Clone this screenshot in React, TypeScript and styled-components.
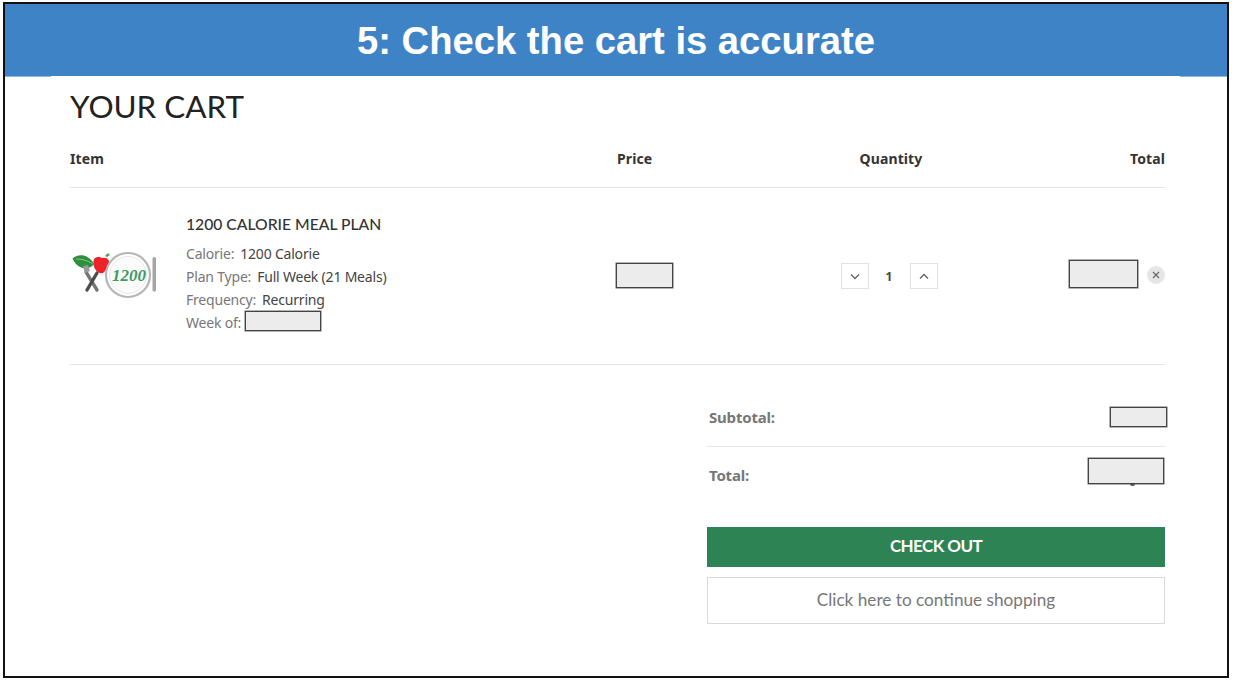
import React from "react";
import styled, { createGlobalStyle } from "styled-components";

const GlobalStyle = createGlobalStyle`
  html, body {
    margin: 0;
    padding: 0;
    background: #fff;
  }
  * {
    box-sizing: border-box;
  }
`;

const body = `"Noto Sans", "Open Sans", sans-serif`;
const display = `Lato, "Open Sans", sans-serif`;

const Slide = styled.div`
  width: 1226px;
  height: 676px;
  margin: 2px 0 0 3px;
  border: 2px solid #111;
  background: #fff;
  overflow: hidden;
`;

const Banner = styled.h1`
  margin: 0;
  height: 73px;
  background:
    linear-gradient(
        to right,
        #8fb8e0 46px,
        #fff 46px,
        #fff calc(100% - 47px),
        #8fb8e0 calc(100% - 47px)
      )
      bottom / 100% 1px no-repeat,
    #3f83c7;
  color: #fff;
  font: bold 38.2px/74px "Liberation Sans", Arial, sans-serif;
  text-align: center;
`;

const Content = styled.div`
  padding: 0 62px 0 65px;
`;

const Title = styled.h2`
  margin: 0;
  padding-top: 11px;
  height: 57px;
  font: 400 31.4px/36px ${display};
  color: #222;
`;

const CartGrid = styled.div`
  display: grid;
  grid-template-columns: 547px 150px 248px 150px;
  align-items: center;
`;

const HeadRow = styled(CartGrid)`
  height: 54px;
  border-bottom: 1px solid #e4e4e4;
  font: 700 14px/20px ${body};
  letter-spacing: 0.1px;
  color: #333;
  padding-bottom: 3px;
`;

const ItemRow = styled(CartGrid)`
  height: 177px;
  border-bottom: 1px solid #e4e4e4;
`;

const HeadCell = styled.div<{ $align?: string }>`
  text-align: ${(p) => p.$align || "left"};
`;

const Product = styled.div`
  display: flex;
  align-items: center;
  gap: 28px;
  margin-top: -5px;
`;

const Logo = styled.svg`
  width: 88px;
  height: 48px;
  flex: none;
  margin-top: 3px;
`;

const ProductName = styled.div`
  font: 500 15.7px/20px ${display};
  color: #333;
  margin-bottom: 8px;
`;

const Option = styled.div`
  display: flex;
  align-items: center;
  gap: 6px;
  height: 23px;
  font: 400 14px/23px ${body};
  letter-spacing: -0.2px;
  color: #444;
`;

const OptionLabel = styled.span`
  color: #777;
`;

const WeekBox = styled.div`
  margin: -2px 0 0 -2px;
`;

const Redacted = styled.div<{ $w: number; $h: number }>`
  width: ${(p) => p.$w}px;
  height: ${(p) => p.$h}px;
  flex: none;
  background: #ececec;
  border: 1px solid #444;
  box-shadow: 0 0 0 0.5px #666;
`;

const PriceCell = styled.div`
  margin: -2px 0 0 -1px;
`;

const Stepper = styled.div`
  display: flex;
  align-items: center;
  justify-content: center;
  font: 700 12px/20px ${body};
  color: #444;
  margin-left: -4px;
`;

const StepButton = styled.button`
  width: 28px;
  height: 26px;
  padding: 0;
  display: flex;
  align-items: center;
  justify-content: center;
  background: #fff;
  border: 1px solid #e2e2e2;
`;

const Qty = styled.span`
  width: 41px;
  text-align: center;
  padding-top: 2px;
`;

const Chevron = styled.svg`
  width: 10px;
  height: 7px;
  fill: none;
  stroke: #666;
  stroke-width: 1.4;
`;

const TotalCell = styled.div`
  display: flex;
  align-items: center;
  justify-content: flex-end;
  gap: 9px;
  margin-top: -5px;
`;

const Remove = styled.button`
  width: 18px;
  height: 18px;
  padding: 0;
  border: 0;
  border-radius: 50%;
  background: #e6e6e6;
  display: flex;
  align-items: center;
  justify-content: center;
  margin-top: 2px;
`;

const Cross = styled.svg`
  width: 8px;
  height: 8px;
  stroke: #666;
  stroke-width: 1.1;
`;

const Summary = styled.div`
  width: 458px;
  margin-left: auto;
`;

const SummaryRow = styled.div<{ $h: number; $line?: boolean }>`
  height: ${(p) => p.$h}px;
  display: flex;
  align-items: center;
  justify-content: space-between;
  padding: ${(p) => (p.$line ? "22px 0 0 2px" : "0 0 10px 2px")};
  border-bottom: ${(p) => (p.$line ? "1px solid #e8e8e8" : "none")};
  font: 700 15px/20px ${body};
  letter-spacing: -0.2px;
  color: #777;
`;

const Overhang = styled.div`
  margin-right: -2px;
`;

const TotalBox = styled.div`
  margin-top: -8px;
  margin-right: 1px;
  position: relative;
  &::after {
    content: "";
    position: absolute;
    left: 42px;
    bottom: -2px;
    width: 5px;
    height: 2px;
    background: #555;
    border-radius: 0 0 3px 3px;
  }
`;

const CheckOut = styled.button`
  display: block;
  width: 100%;
  height: 40px;
  margin-top: 14px;
  padding: 0 0 2px;
  border: 0;
  background: #2e8355;
  color: #fff;
  font: 700 17px/20px ${display};
  letter-spacing: -0.6px;
`;

const Continue = styled.button`
  display: block;
  width: 100%;
  height: 47px;
  margin-top: 10px;
  padding: 0 0 2px;
  background: #fff;
  border: 1px solid #d9d9d9;
  color: #777;
  font: 400 17.2px/20px ${display};
`;

const PlateLogo = () => (
  <Logo viewBox="70 251 88 48">
    <path d="M72.5 258.5C77 254 88 253 94 264 90 270 78 271 72.5 258.5z" fill="#2f8f3f" />
    <path d="M76 259c5 0 11 1 17 5" stroke="#9ccf9c" strokeWidth="0.8" fill="none" />
    <path d="M86 272l11 18" stroke="#777" strokeWidth="3.4" strokeLinecap="round" />
    <path d="M97 273l-10 17" stroke="#4d4d4d" strokeWidth="3.4" strokeLinecap="round" />
    <path d="M83 266l2 7 5-2-2-6z" fill="#999" />
    <path d="M94 259c3-3 6-2 8-1 3-1 6 0 7 3 0 5-3 10-6 12-3 1-6-1-8-4-2-3-2-7-1-10z" fill="#ee2229" />
    <path d="M105 256l3-3 2 2-3 2z" fill="#5a9a6a" />
    <circle cx="128" cy="275" r="22" fill="#fff" stroke="#b5b5b5" strokeWidth="2.2" />
    <circle cx="128" cy="275" r="18.5" fill="#fbfbfb" stroke="#e2e2e2" strokeWidth="0.8" />
    <text x="129" y="281" textAnchor="middle" fontFamily="'Liberation Serif', serif" fontStyle="italic" fontWeight="700" fontSize="17" fill="#3c9a63">1200</text>
    <path d="M152.5 258c2-2 3.5-1 3.5 1v31c0 2-3.5 2-3.5 0z" fill="#a5a5a5" />
  </Logo>
);

export default function App() {
  return (
    <>
      <GlobalStyle />
      <Slide>
        <Banner>5: Check the cart is accurate</Banner>
        <Content>
          <Title>YOUR CART</Title>
          <HeadRow>
            <HeadCell>Item</HeadCell>
            <HeadCell>Price</HeadCell>
            <HeadCell $align="center">Quantity</HeadCell>
            <HeadCell $align="right">Total</HeadCell>
          </HeadRow>
          <ItemRow>
            <Product>
              <PlateLogo />
              <div>
                <ProductName>1200 CALORIE MEAL PLAN</ProductName>
                <Option>
                  <OptionLabel>Calorie:</OptionLabel> 1200 Calorie
                </Option>
                <Option>
                  <OptionLabel>Plan Type:</OptionLabel> Full Week (21 Meals)
                </Option>
                <Option>
                  <OptionLabel>Frequency:</OptionLabel> Recurring
                </Option>
                <Option>
                  <OptionLabel>Week of:</OptionLabel>
                  <WeekBox>
                    <Redacted $w={76} $h={20} />
                  </WeekBox>
                </Option>
              </div>
            </Product>
            <PriceCell>
              <Redacted $w={57} $h={25} />
            </PriceCell>
            <Stepper>
              <StepButton>
                <Chevron viewBox="0 0 10 7">
                  <path d="M1 1.5l4 4 4-4" />
                </Chevron>
              </StepButton>
              <Qty>1</Qty>
              <StepButton>
                <Chevron viewBox="0 0 10 7">
                  <path d="M1 5.5l4-4 4 4" />
                </Chevron>
              </StepButton>
            </Stepper>
            <TotalCell>
              <Redacted $w={69} $h={28} />
              <Remove>
                <Cross viewBox="0 0 8 8">
                  <path d="M1 1l6 6M7 1l-6 6" />
                </Cross>
              </Remove>
            </TotalCell>
          </ItemRow>
          <Summary>
            <SummaryRow $h={82} $line>
              <span>Subtotal:</span>
              <Overhang>
                <Redacted $w={57} $h={20} />
              </Overhang>
            </SummaryRow>
            <SummaryRow $h={66}>
              <span>Total:</span>
              <TotalBox>
                <Redacted $w={76} $h={26} />
              </TotalBox>
            </SummaryRow>
            <CheckOut>CHECK OUT</CheckOut>
            <Continue>Click here to continue shopping</Continue>
          </Summary>
        </Content>
      </Slide>
    </>
  );
}
